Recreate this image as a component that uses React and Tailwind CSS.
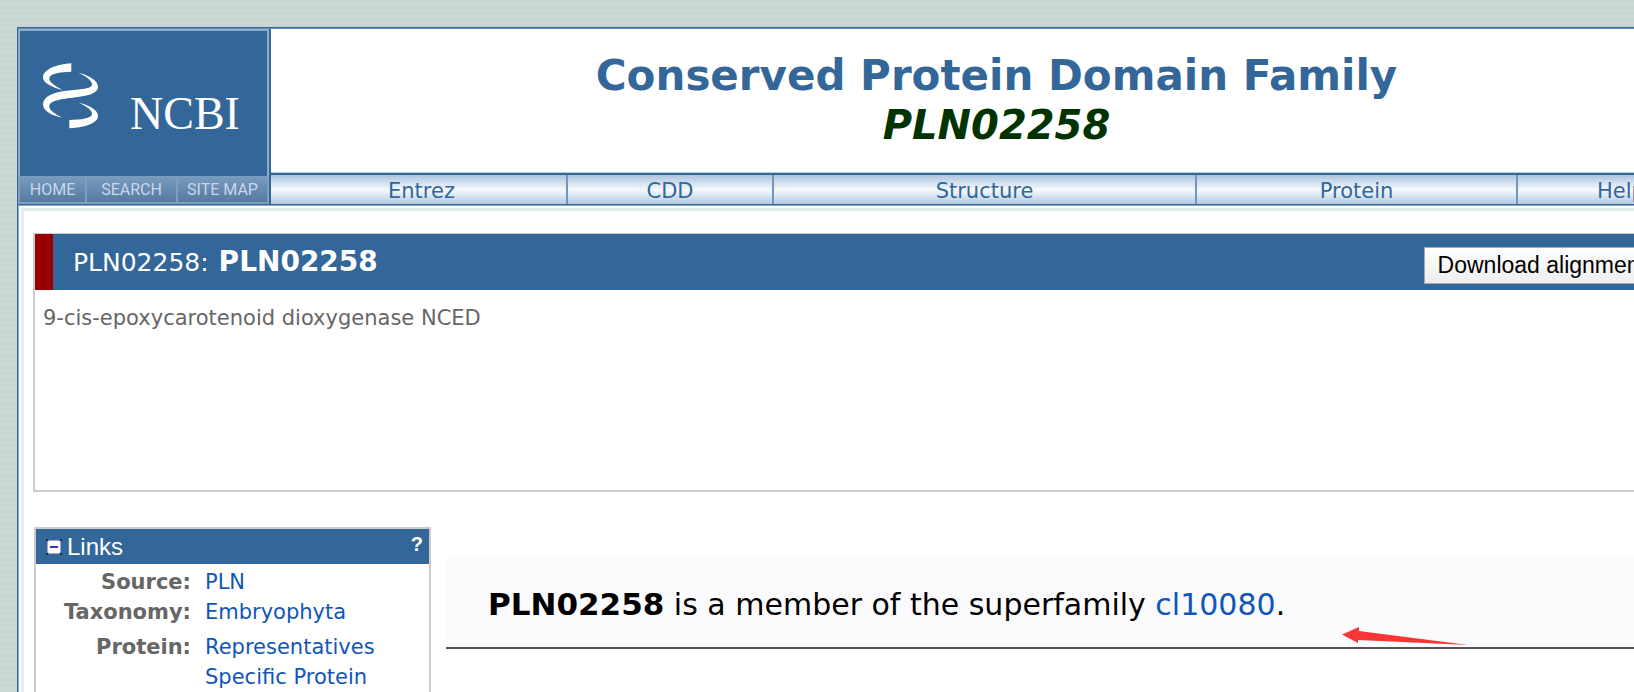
const logoLinks = [
  { label: "HOME", width: "w-[67px]" },
  { label: "SEARCH", width: "w-[91px]" },
  { label: "SITE MAP", width: "flex-1" },
];

const navItems = [
  { label: "Entrez", width: "w-[297px] pl-1.5" },
  { label: "CDD", width: "w-[206px]" },
  { label: "Structure", width: "w-[423px]" },
  { label: "Protein", width: "w-[321px]" },
  { label: "Help", width: "flex-1 pl-0.5" },
];

const linkRows = [
  { label: "Source:", values: ["PLN"], pad: "pt-[3px]" },
  { label: "Taxonomy:", values: ["Embryophyta"], pad: "pt-0" },
  { label: "Protein:", values: ["Representatives", "Specific Protein"], pad: "pt-[5px]" },
];

const Logo = () => (
  <svg viewBox="0 2 247 145" className="block w-full" role="img" aria-label="NCBI">
    <g fill="#fff">
      <path d="M51.300 34.300C37 35 23 40.500 23 48.500C23 54 32 58.500 42.500 60.900C34 56.500 29.300 53 29.300 49.500C29.300 44.500 40 43 51.300 42.700Z" />
      <path d="M58.500 43.600C71 47.500 78 52 78 58C78 63.500 70 66.500 58 68C44 69.800 29.300 71 29.300 77.500C29.300 81 34 84.500 42.500 88.700C31 86.500 23 81.500 23 75.500C23 67.500 33 63.300 46 61.800C60 60.300 72 60 72 55.500C72 52 67 48 58.500 43.600Z" />
      <path d="M58.500 73.600C71 77 78 81.500 78 87C78 94 65 98.500 49.300 99.300V91C61 90.800 72 89.500 72 85C72 81.500 67 77.500 58.500 73.600Z" />
    </g>
    <text x="110" y="100" fill="#fff" fontSize="46" fontFamily="Liberation Serif, serif">NCBI</text>
  </svg>
);

const Header = () => (
  <header className="flex border-y border-t-[#6a90b6] border-b-[#336699]">
    <div className="flex w-[253px] shrink-0 flex-col border-r-2 border-[#336699] bg-[#336699]">
      <div className="flex-1 border-2 border-b-0 border-[#8eacca]">
        <Logo />
      </div>
      <nav className="flex h-7 border-2 border-t-0 border-[#7f9fc0] bg-linear-to-b from-[#7a9cbf] to-[#557ba2]">
        {logoLinks.map((item) => (
          <a
            key={item.label}
            href="#"
            className={`${item.width} border-r-2 border-[#7f9fc0] text-center font-['Roboto',sans-serif] text-[16px] leading-7 text-[#c8d8e8] last:border-r-0`}
          >
            {item.label}
          </a>
        ))}
      </nav>
    </div>
    <div className="flex flex-1 flex-col">
      <div className="h-[144px] border-b border-[#b9cddd] pt-[22px] text-center font-bold">
        <h1 className="text-[42px] leading-[50px] text-[#336699]">Conserved Protein Domain Family</h1>
        <h2 className="text-[40px] leading-[48px] text-[#003300] italic">PLN02258</h2>
      </div>
      <nav className="flex h-[31px] border-t-2 border-[#336699] bg-linear-to-b from-[#a9c3dd] via-[#f6faff] to-[#b3cae2]">
        {navItems.map((item) => (
          <a
            key={item.label}
            href="#"
            className={`${item.width} border-r-2 border-[#7396ba] text-center text-[21px] leading-8 text-[#336699] last:border-r-0`}
          >
            {item.label}
          </a>
        ))}
      </nav>
    </div>
  </header>
);

const DomainCard = () => (
  <section className="h-[259px] border-2 border-t border-[#cccccc]">
    <div className="flex h-14 items-center bg-[#336699] text-white">
      <div className="h-full w-[18px] bg-[#990000]" />
      <p className="flex-1 pl-5 text-[25px]">
        PLN02258: <b className="ml-0.5 text-[28px]">PLN02258</b>
      </p>
      <button className="mt-1.5 mr-12 h-[37px] border border-[#aaaaaa] bg-linear-to-b from-white to-[#eeeeee] px-[13px] font-['Liberation_Sans',Arial,sans-serif] text-[23px] leading-[34px] text-black">
        Download alignment
      </button>
    </div>
    <p className="px-2 pt-3 text-[21px] leading-8 text-[#666666]">9-cis-epoxycarotenoid dioxygenase NCED</p>
  </section>
);

const LinksPanel = () => (
  <aside className="ml-px w-[397px] shrink-0 self-start border-2 border-[#cccccc] pb-8">
    <div className="flex h-[35px] items-center bg-[#336699] pr-1.5 pl-2.5 font-['Liberation_Sans',Arial,sans-serif] text-white">
      <button aria-label="Collapse links">
        <svg width="16" height="16" viewBox="0 0 16 16" className="block">
          <path d="M0 0h2v2H0zM14 0h2v2h-2zM0 14h2v2H0zM14 14h2v2h-2z" fill="#1c2a55" />
          <rect x="1.500" y="1.500" width="13" height="13" rx="2" fill="#fff" stroke="#a9a0dc" />
          <path d="M4 8h8" stroke="#3a2fc0" strokeWidth="2" />
        </svg>
      </button>
      <h3 className="flex-1 pl-[5px] text-[24px]">Links</h3>
      <a href="#" className="pb-1.5 text-[20px] font-bold">?</a>
    </div>
    <table className="w-full text-[21px] leading-[30px]">
      <tbody>
        {linkRows.map((row) => (
          <tr key={row.label} className="align-top">
            <th className={`${row.pad} w-[155px] text-right font-bold text-[#666666]`}>{row.label}</th>
            <td className={`${row.pad} pl-[14px]`}>
              {row.values.map((value) => (
                <a key={value} href="#" className="block text-[#1155bb]">
                  {value}
                </a>
              ))}
            </td>
          </tr>
        ))}
      </tbody>
    </table>
  </aside>
);

const Membership = () => (
  <section className="relative mt-[31px] flex-1 self-start border-b-2 border-[#555555] bg-[#fbfbfe] pt-[25px] pb-[21px] pl-[42px]">
    <p className="text-[30px] leading-[43px] text-black">
      <b className="text-[31px]">PLN02258</b> is a member of the superfamily{" "}
      <a href="#" className="text-[#1155bb]">cl10080</a>.
    </p>
    <svg width="128" height="20" viewBox="0 0 128 20" className="absolute bottom-px left-[895px]">
      <path d="M1 8.500L18 1V5L127 19L17 14V17Z" fill="#f93636" />
    </svg>
  </section>
);

const App = () => {
  return (
    <div className="h-screen overflow-hidden bg-[#c9d6d3] bg-[repeating-linear-gradient(#c9d6d3_0px,#c9d6d3_3px,#cdd9d7_3px,#cdd9d7_6px)] pt-[27px] pl-[17px] font-['DejaVu_Sans',Verdana,sans-serif]">
      {/* The page is wider than the window, its right side runs off screen */}
      <div className="-mr-[88px] min-h-full border-t border-l border-[#336699] bg-white">
        <Header />
        <div className="border-t border-l border-[#8fabc9] pt-0.5 pl-0.5">
          <main className="min-h-screen border-t-3 border-l-3 border-[#e1ecec] pt-[22px] pr-3 pl-[9px]">
            <DomainCard />
            <div className="mt-[35px] flex gap-[15px]">
              <LinksPanel />
              <Membership />
            </div>
          </main>
        </div>
      </div>
    </div>
  );
};

export default App;
